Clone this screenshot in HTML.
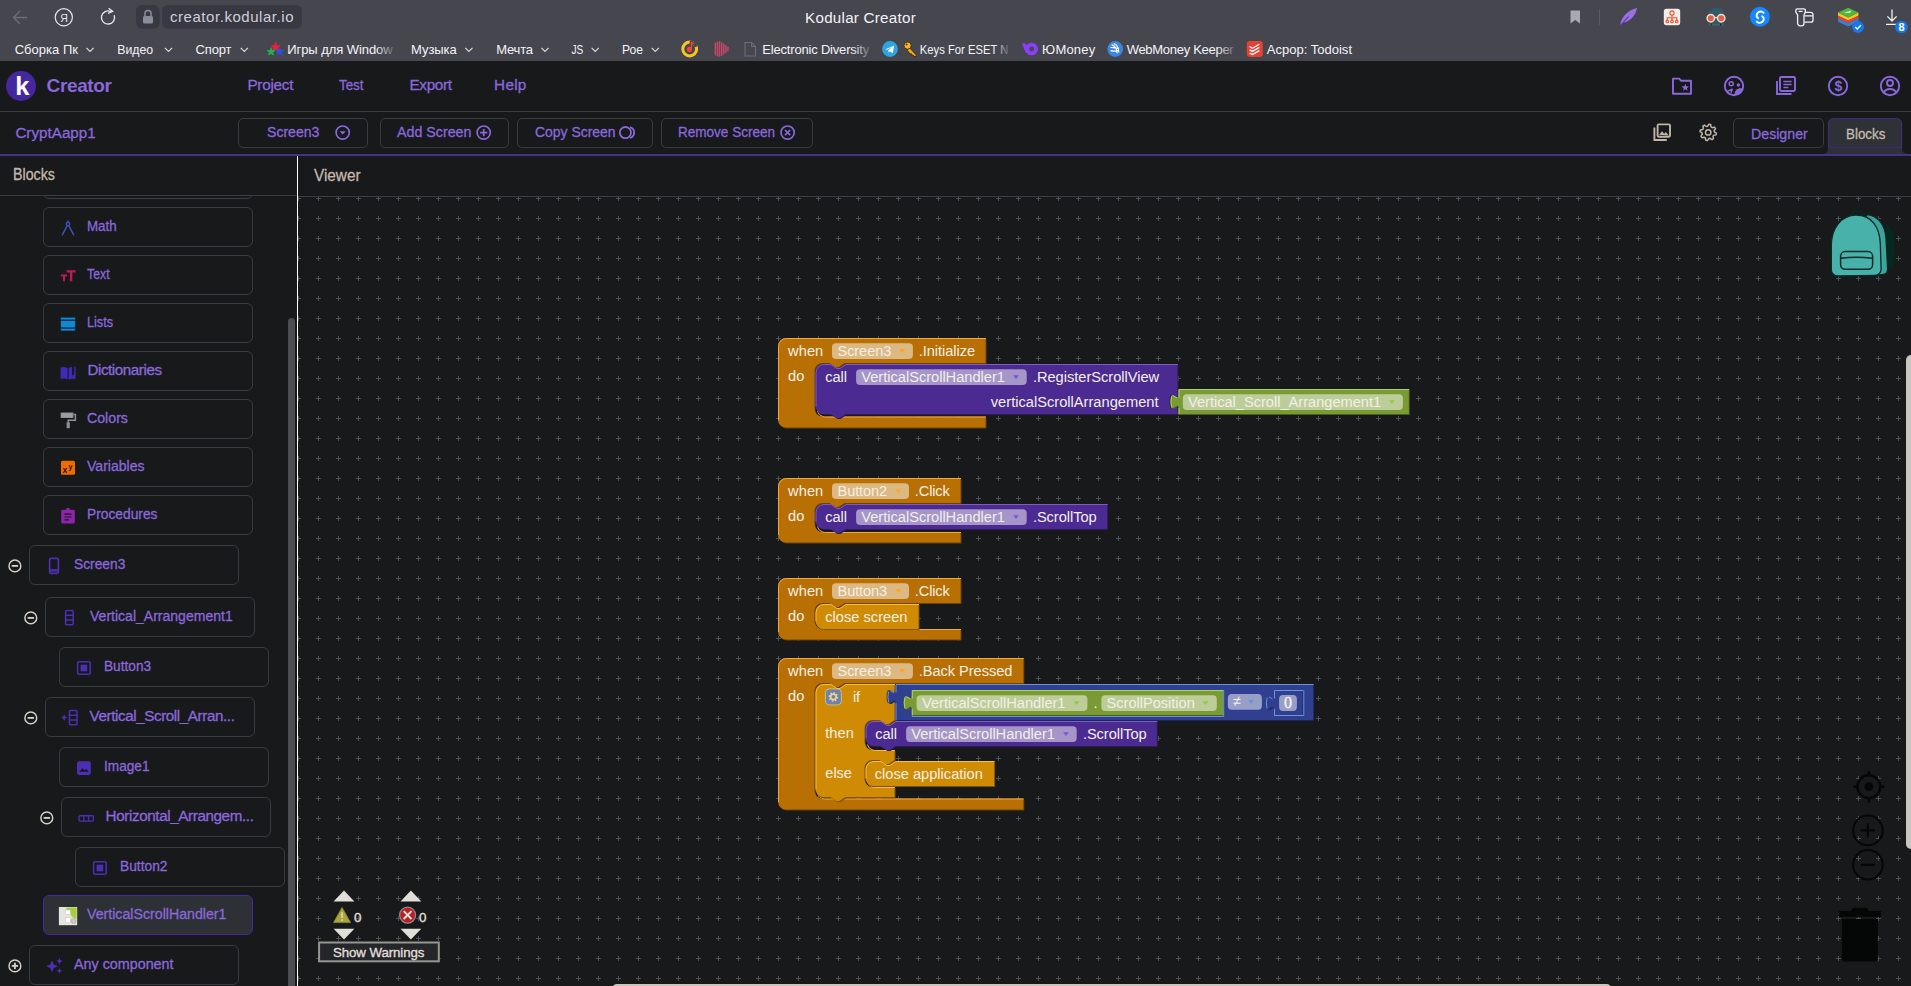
<!DOCTYPE html>
<html lang="en"><head><meta charset="utf-8"><title>Kodular Creator</title>
<style>
*{box-sizing:border-box;margin:0;padding:0}
html,body{width:1911px;height:986px;overflow:hidden;background:#18191b;}
body{position:relative;font-family:"Liberation Sans",sans-serif;}
.t{position:absolute;white-space:nowrap;line-height:1;transform-origin:0 50%;}
.j{-webkit-text-stroke:.3px currentColor;}
.a{position:absolute;}
svg{position:absolute;overflow:visible}
svg text{font-family:"Liberation Sans",sans-serif;}
</style></head>
<body>
<div class="a" id="browser" style="left:0;top:0;width:1911px;height:61px;background:#46464f"></div>
<svg class="a" style="left:0;top:0" width="1911" height="61" viewBox="0 0 1911 61">
<path d="M27 17.5H14M20 11l-6.5 6.5L20 24" fill="none" stroke="#6d6d78" stroke-width="1.4"/>
<circle cx="63.8" cy="17.3" r="8.6" fill="none" stroke="#e4e4ea" stroke-width="1.2"/>
<text x="60.30" y="21.60" font-size="10.50" fill="#e4e4ea" >Я</text>
<path d="M114.2 15.2a6.6 6.6 0 1 1 -3.2 -3.6" fill="none" stroke="#e4e4ea" stroke-width="1.4"/>
<path d="M108.6 8.2l4 3.2l-4.6 2" fill="none" stroke="#e4e4ea" stroke-width="1.4"/>
<rect x="136" y="5" width="23.6" height="23.8" rx="6" fill="#383842"/>
<rect x="162" y="5" width="140" height="23.8" rx="6" fill="#383842"/>
<rect x="143" y="16" width="10" height="7.6" rx="1.6" fill="#8a8e9a"/>
<path d="M145 16v-2.6a3 3 0 0 1 6 0V16" fill="none" stroke="#8a8e9a" stroke-width="1.5"/>
<text x="170.00" y="22.40" font-size="15.00" fill="#cfcfd8" letter-spacing="0.545" >creator.kodular.io</text>
<text x="805.10" y="22.60" font-size="15.20" fill="#f2f2f6" letter-spacing="0.243" >Kodular Creator</text>
<path d="M1570.5 10.5h9.5v13l-4.75 -3.6l-4.75 3.6z" fill="#a9a9b1"/>
<rect x="1599" y="9" width="1" height="16" fill="#5a5a64"/>
<path d="M1620 25c2-9 8-15 17-17c-1 7-6 13-13 14.5z" fill="#9a6fe0"/><path d="M1619.5 26.5l9 -10" stroke="#5a2fb0" stroke-width="1.1"/>
<rect x="1663.8" y="8.8" width="16.4" height="16.4" rx="2.6" fill="#f0eeeb"/>
<g fill="none" stroke="#f0522a" stroke-width="1.1"><circle cx="1672" cy="13" r="2.1"/><path d="M1672 15.100v2.700M1667.300 20.200v-2.400h9.400v2.400M1672 17.800v2.400"/><circle cx="1667.300" cy="21.400" r="1.300"/><circle cx="1672" cy="21.400" r="1.300"/><circle cx="1676.700" cy="21.400" r="1.300"/></g>
<path d="M1707.600 19.500c-.6-7 3.400-11.700 8.700-11.700s9.300 4.700 8.700 11.700l-1 6.700h-15.400z" fill="#2f5b6b"/>
<circle cx="1710.800" cy="18.200" r="3.700" fill="#e25f4a" stroke="#eadccd" stroke-width="1.500"/><circle cx="1721.200" cy="18.200" r="3.700" fill="#e25f4a" stroke="#eadccd" stroke-width="1.500"/><path d="M1714.500 17.600h3" stroke="#eadccd" stroke-width="1.400"/>
<rect x="1711.400" y="23.600" width="9.600" height="2.200" fill="#14262e"/><path d="M1713 23.600v2.200M1715 23.600v2.200M1717 23.600v2.200M1719 23.600v2.200" stroke="#9fb4bc" stroke-width=".8"/>
<circle cx="1759.9" cy="16.800" r="10" fill="#1688fb"/>
<path d="M1763.6 12.8c-1.8-1.8-4.4-1.6-6 .2c-1.6 1.8-1.2 3.8 .6 5.2M1756.8 21.6c1.8 1.8 4.4 1.6 6-.2c1.6-1.8 1.2-3.8-.6-5.2" fill="none" stroke="#fff" stroke-width="1.9" stroke-linecap="round"/>
<path d="M1797.400 8.800h6.400a1.600 1.600 0 0 1 1.600 1.600v1.800l-1.400 2.600v8.400a2.600 2.600 0 0 1-2.600 2.600h-1.200a2.600 2.600 0 0 1-2.600-2.600v-8.400l-1.800-2.600v-1.800a1.600 1.600 0 0 1 1.600-1.600z" fill="none" stroke="#f0f0f4" stroke-width="1.300" stroke-linejoin="round"/><path d="M1798.600 11.400h4" stroke="#f0f0f4" stroke-width="1.300"/>
<path d="M1804.400 12.400h6.400a2.200 2.200 0 0 1 2.200 2.200v5.400a2.200 2.200 0 0 1-2.200 2.200h-6.400M1804.400 15.800h8.600" fill="none" stroke="#f0f0f4" stroke-width="1.300"/>
<path d="M1838 12.6L1848.200 17.4L1858.400 12.6V15.8L1848.200 20.6L1838 15.8z" fill="#f7c720"/>
<path d="M1838 15.6L1848.200 20.4L1858.400 15.6V18.8L1848.200 23.6L1838 18.8z" fill="#e8402f"/>
<path d="M1838 18.6L1848.200 23.4L1858.400 18.6V21.8L1848.200 26.6L1838 21.8z" fill="#2a84e6"/>
<path d="M1838 12.600L1848.200 7.800L1858.400 12.600L1848.200 17.400z" fill="#4fb83c"/><path d="M1843.500 12.800l8-2.200l-1.500 2.400z" fill="#d8f0c8"/>
<circle cx="1858" cy="27" r="6" fill="#1677e8"/><path d="M1855.200 27l2 2l3.600 -3.800" fill="none" stroke="#fff" stroke-width="1.3"/>
<path d="M1892 9.5v11M1887.4 16.4l4.6 4.6l4.6 -4.6M1886 24.4h12" fill="none" stroke="#f0f0f4" stroke-width="1.3"/>
<circle cx="1901.400" cy="27" r="6.300" fill="#1677e8"/>
<text x="1898.50" y="31.00" font-size="11.00" fill="#fff" font-weight="bold" >8</text>
<text x="14.70" y="53.90" font-size="13.00" fill="#f4f4f8" letter-spacing="0.012" >Сборка Пк</text>
<path d="M86.4 47.8 l3.6 3.6 l3.6 -3.6" fill="none" stroke="#d8d8de" stroke-width="1.2"/>
<text x="117.20" y="53.90" font-size="13.00" fill="#f4f4f8" textLength="35.90" lengthAdjust="spacingAndGlyphs" >Видео</text>
<path d="M164.9 47.8 l3.6 3.6 l3.6 -3.6" fill="none" stroke="#d8d8de" stroke-width="1.2"/>
<text x="195.60" y="53.90" font-size="13.00" fill="#f4f4f8" letter-spacing="-0.164" >Спорт</text>
<path d="M240.7 47.8 l3.6 3.6 l3.6 -3.6" fill="none" stroke="#d8d8de" stroke-width="1.2"/>
<text x="411.00" y="53.90" font-size="13.00" fill="#f4f4f8" letter-spacing="-0.039" >Музыка</text>
<path d="M465.3 47.8 l3.6 3.6 l3.6 -3.6" fill="none" stroke="#d8d8de" stroke-width="1.2"/>
<text x="496.30" y="53.90" font-size="13.00" fill="#f4f4f8" letter-spacing="-0.224" >Мечта</text>
<path d="M541.4 47.8 l3.6 3.6 l3.6 -3.6" fill="none" stroke="#d8d8de" stroke-width="1.2"/>
<text x="571.40" y="53.90" font-size="13.00" fill="#f4f4f8" textLength="11.80" lengthAdjust="spacingAndGlyphs" >JS</text>
<path d="M591.6 47.8 l3.6 3.6 l3.6 -3.6" fill="none" stroke="#d8d8de" stroke-width="1.2"/>
<text x="622.00" y="53.90" font-size="13.00" fill="#f4f4f8" textLength="20.90" lengthAdjust="spacingAndGlyphs" >Рое</text>
<path d="M651.7 47.8 l3.6 3.6 l3.6 -3.6" fill="none" stroke="#d8d8de" stroke-width="1.2"/>
<defs><linearGradient id="fd1" x1="0" x2="1"><stop offset="0.840" stop-color="#f4f4f8"/><stop offset="1" stop-color="#f4f4f8" stop-opacity="0.200"/></linearGradient></defs>
<text x="287.20" y="53.90" font-size="13.00" fill="url(#fd1)" letter-spacing="-0.062" >Игры для Window</text>
<text x="762.30" y="53.90" font-size="13.00" fill="url(#fd1)" letter-spacing="-0.191" >Electronic Diversity</text>
<text x="919.80" y="53.90" font-size="13.00" fill="url(#fd1)" textLength="88.60" lengthAdjust="spacingAndGlyphs" >Keys For ESET N</text>
<text x="1042.10" y="53.90" font-size="13.00" fill="#f4f4f8" letter-spacing="0.189" >ЮMoney</text>
<text x="1126.70" y="53.90" font-size="13.00" fill="url(#fd1)" letter-spacing="-0.289" >WebMoney Keeper</text>
<text x="1266.70" y="53.90" font-size="13.00" fill="#f4f4f8" letter-spacing="0.020" >Аcpop: Todoist</text>
<path d="M275.6 41.5l1.6 3.6l3.8 .3l-2.9 2.5l.9 3.8l-3.4-2l-3.4 2l.9-3.8l-2.9-2.5l3.8-.3z" fill="#e0243c"/>
<path d="M271 47l1.4 3l3.2 .3l-2.4 2.1l.8 3.2l-3-1.7l-2.9 1.7l.8-3.2l-2.4-2.1l3.2-.3z" fill="#22b44c"/>
<path d="M279.6 47l1.4 3l3.2 .3l-2.4 2.1l.8 3.2l-3-1.7l-2.9 1.7l.8-3.2l-2.4-2.1l3.2-.3z" fill="#2a50e0"/>
<circle cx="689.7" cy="49" r="6.9" fill="none" stroke="#f6c81e" stroke-width="3"/><path d="M689.7 42.1a6.9 6.9 0 0 1 6.5 4.6" fill="none" stroke="#46464f" stroke-width="3.4"/>
<circle cx="689.4" cy="49.4" r="2.6" fill="#f0433a"/><path d="M691.4 49.4v-7l3 1.2" stroke="#f0433a" stroke-width="1.3" fill="none"/>
<rect x="714.6" y="42.5" width="1.5" height="13" rx=".7" fill="#c2486a"/>
<rect x="716.7" y="41.5" width="1.5" height="15" rx=".7" fill="#c2486a"/>
<rect x="718.8" y="41.0" width="1.5" height="16" rx=".7" fill="#c2486a"/>
<rect x="720.9" y="42.0" width="1.5" height="14" rx=".7" fill="#c2486a"/>
<rect x="723.0" y="43.5" width="1.5" height="11" rx=".7" fill="#c2486a"/>
<rect x="725.1" y="45.0" width="1.5" height="8" rx=".7" fill="#c2486a"/>
<rect x="727.2" y="46.5" width="1.5" height="5" rx=".7" fill="#c2486a"/>
<path d="M745 42.5h6.5l4 4V56H745z M751.5 42.5v4h4" fill="none" stroke="#6c6c78" stroke-width="1.1"/>
<circle cx="890" cy="49" r="7.9" fill="#2ea5e0"/><path d="M885.6 49.2l8.6-3.6l-1.5 7.6l-2.8-2l-1.4 1.4l-.2-2.2l4-3.6l-5 3z" fill="#fff"/>
<g stroke="#3a2a08" stroke-width=".9" stroke-linejoin="round"><path d="M909.400 47.600l6.800 7.400v1.600h-2.200l-.6-1.400l-1.400 .2l-.4-1.600l-1.600 .2l-2.800-3.800z" fill="#f2a91c"/><circle cx="907.600" cy="45.600" r="3.600" fill="#f6b526"/></g><circle cx="906.600" cy="44.600" r="1" fill="#46464f"/>
<circle cx="1031.600" cy="49" r="4.400" fill="none" stroke="#8b3ffd" stroke-width="3.900"/><path d="M1021.800 43.400h3.800l2.200 5.600a6.400 6.400 0 0 0 .4 3.600l-2.200 .6z" fill="#8b3ffd"/>
<circle cx="1115.2" cy="49" r="7.9" fill="#3a86e0"/><path d="M1111.6 44.6c3 .8 5 3 5.6 8.6M1114 43.4c3 1.2 4.6 4 4.8 9M1110.4 47.2c2 .2 5.4 1.2 8.6 1.2M1110.6 50.6c2.4 .6 5.6 .6 8 0" fill="none" stroke="#fff" stroke-width="1.1"/>
<rect x="1246.8" y="41" width="16" height="16" rx="3" fill="#e44232"/><path d="M1249.6 46.6l2.8 1.6l7-4M1249.6 49.8l2.8 1.6l7-4M1249.6 53l2.8 1.6l7-4" fill="none" stroke="#fff" stroke-width="1.3"/>
</svg>
<div class="a" id="appbar" style="left:0;top:61px;width:1911px;height:51px;background:#18191b;border-bottom:1px solid #3a3b3e"></div>
<div class="a" style="left:5.8px;top:70.9px;width:30.2px;height:30.2px;border-radius:50%;background:#4527a0"></div>
<span class="t " style="left:15.30px;top:73.61px;font-size:25.50px;color:#fff;font-weight:bold;">k</span>
<span class="t " style="left:46.60px;top:75.82px;font-size:19.00px;color:#8a68dc;letter-spacing:-0.380px;font-weight:bold;">Creator</span>
<span class="t j" style="left:247.40px;top:77.15px;font-size:15.30px;color:#8a68dc;letter-spacing:-0.269px;">Project</span>
<span class="t j" style="left:339.20px;top:77.15px;font-size:15.30px;color:#8a68dc;transform:scaleX(0.8731);">Test</span>
<span class="t j" style="left:409.50px;top:77.15px;font-size:15.30px;color:#8a68dc;letter-spacing:-0.343px;">Export</span>
<span class="t j" style="left:494.10px;top:77.15px;font-size:15.30px;color:#8a68dc;letter-spacing:0.276px;">Help</span>
<svg class="a" style="left:0;top:61px" width="1911" height="95" viewBox="0 61 1911 95" fill="none" stroke="#8a68dc" stroke-width="1.9">
<path d="M1673 78.6h6.2l2 2.2h9.8v13h-18z" stroke-linejoin="round"/><path d="M1685.30 83.70L1686.30 86.22L1689.01 86.39L1686.92 88.13L1687.59 90.76L1685.30 89.30L1683.01 90.76L1683.68 88.13L1681.59 86.39L1684.30 86.22z" fill="#8a68dc" stroke="none"/>
<circle cx="1734" cy="86" r="9.200"/><circle cx="1731.200" cy="83.700" r="2" stroke-width="1.500"/><circle cx="1738.400" cy="85" r="1.700" fill="#8a68dc" stroke="none"/><path d="M1734.600 95c-.4-4.200 2.400-6.800 5.800-6.800c1.400 0 2.400 .4 3 1a9.200 9.200 0 0 1-8.800 5.800z" fill="#8a68dc" stroke="none"/><path d="M1726.600 91.600l5.600-2.400l-1.200 3.600" stroke-width="1.500" stroke-linejoin="round"/>
<rect x="1780" y="77" width="15" height="14" rx="1.2"/><path d="M1777 81v13h14.5"/><path d="M1783.4 81.4h8.2M1783.4 84.6h8.2M1783.4 87.6h5" stroke-width="1.5"/>
<circle cx="1838" cy="86" r="9.2"/>
<text x="1834.40" y="91.00" font-size="14.00" fill="#8a68dc" font-weight="bold" stroke="none">$</text>
<circle cx="1890" cy="86" r="9.2"/><circle cx="1890" cy="83" r="3" /><path d="M1883.6 92.4c1.6-2.6 4-3.4 6.4-3.4s4.8 .8 6.4 3.4"/>
<g stroke-width="1.700">
<circle cx="342.7" cy="132.6" r="6.6"/><path d="M339.6 131.2h6.2l-3.1 3.4z" fill="#8a68dc" stroke="none"/>
<circle cx="483.7" cy="132.6" r="6.6"/><path d="M483.7 129v7.2M480.1 132.6h7.2"/>
<circle cx="625.4" cy="132.6" r="5.6" stroke-width="1.8"/><path d="M630 127.2a5.6 5.6 0 0 1 0 10.8" stroke-width="1.8"/>
<circle cx="787.6" cy="132.6" r="6.6"/><path d="M785 130l5.2 5.2M790.2 130l-5.2 5.2"/>
</g>
<g stroke="#beb4a8" stroke-width="1.900">
<rect x="1657.6" y="124.4" width="12.4" height="12.4" rx="1.2"/><path d="M1654.4 127.6v12.4h12.4"/><path d="M1659 134.8l3-3.6l2.2 2.6l1.6-1.8l3 3.6z" fill="#beb4a8" stroke="none"/>
<path d="M1716.37 133.11 L1716.02 134.87 L1713.70 135.26 L1712.95 136.39 L1713.48 138.68 L1711.98 139.68 L1710.07 138.31 L1708.73 138.58 L1707.49 140.57 L1705.73 140.22 L1705.34 137.90 L1704.21 137.15 L1701.92 137.68 L1700.92 136.18 L1702.29 134.27 L1702.02 132.93 L1700.03 131.69 L1700.38 129.93 L1702.70 129.54 L1703.45 128.41 L1702.92 126.12 L1704.42 125.12 L1706.33 126.49 L1707.67 126.22 L1708.91 124.23 L1710.67 124.58 L1711.06 126.90 L1712.19 127.65 L1714.48 127.12 L1715.48 128.62 L1714.11 130.53 L1714.38 131.87z" stroke-width="1.5" stroke-linejoin="round"/>
<circle cx="1708.2" cy="132.4" r="2.7" stroke-width="1.5"/>
</g>
</svg>
<span class="t j" style="left:15.40px;top:124.53px;font-size:15.20px;color:#8a68dc;letter-spacing:0.014px;">CryptAapp1</span>
<div class="a btn" style="left:238.0px;top:118.300px;width:129.5px;height:29.600px;border:1px solid #3a3b3f;border-radius:5px"></div>
<span class="t j" style="left:267.00px;top:124.23px;font-size:15.20px;color:#8a68dc;transform:scaleX(0.9272);">Screen3</span>
<div class="a btn" style="left:380.0px;top:118.300px;width:128.8px;height:29.600px;border:1px solid #3a3b3f;border-radius:5px"></div>
<span class="t j" style="left:397.30px;top:124.23px;font-size:15.20px;color:#8a68dc;transform:scaleX(0.9379);">Add Screen</span>
<div class="a btn" style="left:517.0px;top:118.300px;width:135.6px;height:29.600px;border:1px solid #3a3b3f;border-radius:5px"></div>
<span class="t j" style="left:534.50px;top:124.23px;font-size:15.20px;color:#8a68dc;transform:scaleX(0.9184);">Copy Screen</span>
<div class="a btn" style="left:661.0px;top:118.300px;width:152.0px;height:29.600px;border:1px solid #3a3b3f;border-radius:5px"></div>
<span class="t j" style="left:678.30px;top:124.23px;font-size:15.20px;color:#8a68dc;transform:scaleX(0.8910);">Remove Screen</span>
<div class="a btn" style="left:1733.3px;top:118.3px;width:90.6px;height:29.6px;border:1px solid #3a3b3f;border-radius:5px"></div>
<span class="t j" style="left:1750.60px;top:126.43px;font-size:15.20px;color:#8a68dc;transform:scaleX(0.9337);">Designer</span>
<svg class="a" style="left:1818px;top:114px" width="93" height="42" viewBox="1818 114 93 42"><path d="M1823 154a5 5 0 0 0 5-5V123.200a5 5 0 0 1 5-5h64a5 5 0 0 1 5 5V149a5 5 0 0 0 5 5z" fill="#2e3135"/><path d="M1828.500 147.600V123.700a5 5 0 0 1 5-5h63.200a5 5 0 0 1 5 5v23.900z" fill="none" stroke="#3f2c86" stroke-width="1"/></svg>
<span class="t j" style="left:1846.00px;top:126.43px;font-size:15.20px;color:#c4bbb0;transform:scaleX(0.8802);">Blocks</span>
<div class="a" style="left:0;top:154px;width:1911px;height:2px;background:#47308c"></div>
<span class="t j" style="left:12.60px;top:165.59px;font-size:16.20px;color:#c2b8ab;transform:scaleX(0.8803);">Blocks</span>
<span class="t j" style="left:314.40px;top:167.09px;font-size:16.20px;color:#c2b8ab;transform:scaleX(0.9465);">Viewer</span>
<div class="a" style="left:0;top:195px;width:296px;height:1px;background:#3b3c3f"></div>
<div class="a" style="left:298px;top:196px;width:1613px;height:1px;background:#3b3c3f"></div>
<div class="a" style="left:297px;top:156px;width:1.400px;height:830px;background:#fff;z-index:5"></div>
<div class="a" id="tree" style="left:0;top:196px;width:296px;height:790px;overflow:hidden">
<div class="a item" style="left:43.0px;top:-37.0px;width:210.0px;height:40px;border:1px solid #3a3b3f;border-radius:6px;"></div>
<div class="a item" style="left:43.0px;top:11.0px;width:210.0px;height:40px;border:1px solid #3a3b3f;border-radius:6px;"></div>
<span class="t j" style="left:87.40px;top:22.23px;font-size:15.20px;color:#8a68dc;transform:scaleX(0.8790);">Math</span>
<div class="a item" style="left:43.0px;top:59.0px;width:210.0px;height:40px;border:1px solid #3a3b3f;border-radius:6px;"></div>
<span class="t j" style="left:87.40px;top:70.23px;font-size:15.20px;color:#8a68dc;transform:scaleX(0.8107);">Text</span>
<div class="a item" style="left:43.0px;top:107.0px;width:210.0px;height:40px;border:1px solid #3a3b3f;border-radius:6px;"></div>
<span class="t j" style="left:87.40px;top:118.23px;font-size:15.20px;color:#8a68dc;transform:scaleX(0.8352);">Lists</span>
<div class="a item" style="left:43.0px;top:155.0px;width:210.0px;height:40px;border:1px solid #3a3b3f;border-radius:6px;"></div>
<span class="t j" style="left:87.40px;top:166.23px;font-size:15.20px;color:#8a68dc;letter-spacing:-0.428px;">Dictionaries</span>
<div class="a item" style="left:43.0px;top:203.0px;width:210.0px;height:40px;border:1px solid #3a3b3f;border-radius:6px;"></div>
<span class="t j" style="left:87.40px;top:214.23px;font-size:15.20px;color:#8a68dc;transform:scaleX(0.9333);">Colors</span>
<div class="a item" style="left:43.0px;top:251.0px;width:210.0px;height:40px;border:1px solid #3a3b3f;border-radius:6px;"></div>
<span class="t j" style="left:87.40px;top:262.23px;font-size:15.20px;color:#8a68dc;transform:scaleX(0.9254);">Variables</span>
<div class="a item" style="left:43.0px;top:299.0px;width:210.0px;height:40px;border:1px solid #3a3b3f;border-radius:6px;"></div>
<span class="t j" style="left:87.40px;top:310.23px;font-size:15.20px;color:#8a68dc;transform:scaleX(0.9070);">Procedures</span>
<div class="a item" style="left:29.0px;top:349.0px;width:210.0px;height:40px;border:1px solid #3a3b3f;border-radius:6px;"></div>
<span class="t j" style="left:73.60px;top:360.23px;font-size:15.20px;color:#8a68dc;transform:scaleX(0.9078);">Screen3</span>
<div class="a item" style="left:45.0px;top:401.0px;width:210.0px;height:40px;border:1px solid #3a3b3f;border-radius:6px;"></div>
<span class="t j" style="left:89.60px;top:412.23px;font-size:15.20px;color:#8a68dc;transform:scaleX(0.9236);">Vertical_Arrangement1</span>
<div class="a item" style="left:59.0px;top:451.0px;width:210.0px;height:40px;border:1px solid #3a3b3f;border-radius:6px;"></div>
<span class="t j" style="left:103.50px;top:462.23px;font-size:15.20px;color:#8a68dc;transform:scaleX(0.8990);">Button3</span>
<div class="a item" style="left:45.0px;top:501.0px;width:210.0px;height:40px;border:1px solid #3a3b3f;border-radius:6px;"></div>
<span class="t j" style="left:89.60px;top:512.23px;font-size:15.20px;color:#8a68dc;letter-spacing:-0.400px;">Vertical_Scroll_Arran...</span>
<div class="a item" style="left:59.0px;top:551.0px;width:210.0px;height:40px;border:1px solid #3a3b3f;border-radius:6px;"></div>
<span class="t j" style="left:103.50px;top:562.23px;font-size:15.20px;color:#8a68dc;transform:scaleX(0.8976);">Image1</span>
<div class="a item" style="left:61.0px;top:601.0px;width:210.0px;height:40px;border:1px solid #3a3b3f;border-radius:6px;"></div>
<span class="t j" style="left:105.60px;top:612.23px;font-size:15.20px;color:#8a68dc;letter-spacing:-0.376px;">Horizontal_Arrangem...</span>
<div class="a item" style="left:75.0px;top:651.0px;width:210.0px;height:40px;border:1px solid #3a3b3f;border-radius:6px;"></div>
<span class="t j" style="left:119.50px;top:662.23px;font-size:15.20px;color:#8a68dc;transform:scaleX(0.9066);">Button2</span>
<div class="a item" style="left:43.0px;top:699.0px;width:210.0px;height:40px;border:1px solid #4527a0;border-radius:6px;background:#2d3034;"></div>
<span class="t j" style="left:87.20px;top:710.23px;font-size:15.20px;color:#8a68dc;transform:scaleX(0.9335);">VerticalScrollHandler1</span>
<div class="a item" style="left:29.0px;top:749.0px;width:210.0px;height:40px;border:1px solid #3a3b3f;border-radius:6px;"></div>
<span class="t j" style="left:73.60px;top:760.23px;font-size:15.20px;color:#8a68dc;transform:scaleX(0.9430);">Any component</span>
</div>
<div class="a" style="left:287.500px;top:318px;width:7px;height:668px;background:#4a4f54;border-radius:3.500px 3.500px 0 0"></div>
<svg class="a" style="left:0;top:196px" width="296" height="790" viewBox="0 196 296 790">
<g stroke="#3f51b5" stroke-width="1.5" fill="none"><circle cx="68" cy="224" r="1.7"/><path d="M67.2 225.6l-5 9.6M68.8 225.6l5 9.6M68 220.4v2"/></g>
<path d="M66.6 270.2h9v2.3h-3.3v8.8h-2.4v-8.8h-3.3zM61 274.6h6v2h-2v4.7h-2v-4.7h-2z" fill="#c2185b"/>
<g transform="translate(0,1.200)">
<rect x="60.8" y="316.4" width="14.4" height="2" fill="#0d8ad6"/><rect x="60.8" y="319.6" width="14.4" height="6.6" fill="#0d8ad6"/><rect x="60.8" y="327.4" width="14.4" height="2" fill="#0d8ad6"/>
<path d="M60.6 366.4c2.4-.8 4.8-.6 7 .6v11.4c-2.2-1.2-4.6-1.4-7-.6zM68.6 367c1-.8 2.2-1.2 3.4-1.4v8.6l2.2-1.2v-7.6l1.4-.2v12.6c-2.4-.6-4.8-.4-7 .6z" fill="#3d2bb8"/>
<path d="M61.4 412h11.2v4H61.4zM73.6 413.4h1.8v5.6h-7.2v2.4" fill="none" stroke="#8c8f93" stroke-width="1.5"/><rect x="61.4" y="412" width="11.2" height="4" fill="#9b9ea2"/><rect x="66.6" y="421" width="3.2" height="6" fill="#8c8f93"/>
<rect x="61" y="459.6" width="14" height="14" rx="1.6" fill="#ef6c00"/>
<text x="62.40" y="471.60" font-size="8.50" fill="#25130a" font-weight="bold" >x</text>
<text x="68.60" y="467.40" font-size="7.00" fill="#25130a" font-weight="bold" >y</text>
<path d="M62.6 508.6h3.4a2 2 0 0 1 4 0h3.4a1.4 1.4 0 0 1 1.4 1.4v11a1.4 1.4 0 0 1 -1.4 1.4H62.6a1.4 1.4 0 0 1 -1.4 -1.4v-11a1.4 1.4 0 0 1 1.4 -1.4z" fill="#8e24aa"/><path d="M64.4 513h7.2M64.4 515.8h7.2M64.4 518.6h4.6" stroke="#18191b" stroke-width="1.2"/>
</g>
<circle cx="14.9" cy="565.9" r="5.900" fill="none" stroke="#d2cec8" stroke-width="1.500"/><path d="M11.7 565.9h6.400" stroke="#d2cec8" stroke-width="1.900"/>
<circle cx="30.8" cy="617.9" r="5.900" fill="none" stroke="#d2cec8" stroke-width="1.500"/><path d="M27.6 617.9h6.400" stroke="#d2cec8" stroke-width="1.900"/>
<circle cx="30.8" cy="717.9" r="5.900" fill="none" stroke="#d2cec8" stroke-width="1.500"/><path d="M27.6 717.9h6.400" stroke="#d2cec8" stroke-width="1.900"/>
<circle cx="46.8" cy="817.9" r="5.900" fill="none" stroke="#d2cec8" stroke-width="1.500"/><path d="M43.6 817.9h6.400" stroke="#d2cec8" stroke-width="1.900"/>
<circle cx="14.9" cy="965.9" r="5.900" fill="none" stroke="#d2cec8" stroke-width="1.500"/><path d="M11.7 965.9h6.400" stroke="#d2cec8" stroke-width="1.900"/><path d="M14.9 962.7v6.400" stroke="#d2cec8" stroke-width="1.900"/>
<rect x="49.6" y="558.4" width="8.8" height="15" rx="1.6" fill="none" stroke="#4d2eb4" stroke-width="1.7"/><path d="M49.6 570.4h8.8" stroke="#4d2eb4" stroke-width="2.4"/>
<g fill="none" stroke="#4d2eb4" stroke-width="1.5"><rect x="65.6" y="610.4" width="7.6" height="14.4" rx="1"/><path d="M65.6 615.2h7.6M65.6 620h7.6"/></g>
<rect x="77.6" y="661.7" width="12.6" height="12.6" rx="1.4" fill="none" stroke="#4d2eb4" stroke-width="1.5"/><rect x="80.6" y="664.7" width="6.6" height="6.6" fill="#4d2eb4"/>
<g fill="none" stroke="#4d2eb4" stroke-width="1.5"><rect x="69.4" y="710.4" width="7.6" height="14.4" rx="1"/><path d="M69.4 715.2h7.6M69.4 720h7.6M61.6 717.6h5.2M64.2 715v5.2"/></g>
<rect x="77" y="761.200" width="13.800" height="13.700" rx="1.800" fill="#4d2eb4"/><path d="M79.400 771.800l3-3.800l2.200 2.600l1.600-1.800l2.400 3z" fill="#18191b"/>
<g fill="none" stroke="#4d2eb4" stroke-width="1.4"><rect x="79" y="815.800" width="14.400" height="5.300" rx="1"/><path d="M83.800 815.800v5.300M88.600 815.800v5.300"/></g>
<rect x="93.6" y="861.7" width="12.6" height="12.6" rx="1.4" fill="none" stroke="#4d2eb4" stroke-width="1.5"/><rect x="96.6" y="864.7" width="6.6" height="6.6" fill="#4d2eb4"/>
<rect x="58.900" y="907" width="18.300" height="18.200" fill="#e4e4e0"/><path d="M66.500 907.500h10.200v11.500l-4 -1.500l-3 -4l-3.200 -1.500z" fill="#a5cf3a"/><rect x="65.300" y="910" width="5" height="4.600" fill="#fff" stroke="#c8c8c4" stroke-width=".6"/><rect x="65.300" y="917.800" width="5" height="4.600" fill="#fff" stroke="#c8c8c4" stroke-width=".6"/><circle cx="73.600" cy="921" r="2.600" fill="#c9c9c3" stroke="#b4b4ae" stroke-width=".8"/>
<g transform="translate(0,1.600)"><path d="M52 958.600l1.800 4.200l4.200 1.800l-4.200 1.800l-1.800 4.200l-1.800-4.200l-4.200-1.800l4.200-1.800z" fill="#4d2eb4"/><path d="M59.500 956.400l1 2.100l2.100 1l-2.100 1l-1 2.100l-1-2.100l-2.100-1l2.100-1zM59.500 966.400l.9 1.900l1.900 .9l-1.900 .9l-.9 1.900l-.9-1.900l-1.900-.9l1.900-.9z" fill="#4d2eb4"/></g>
</svg>
<svg class="a" id="ws" style="left:298px;top:197px;overflow:hidden" width="1613" height="789" viewBox="298 197 1613 789">
<defs><pattern id="grid" x="308" y="208" width="20" height="20" patternUnits="userSpaceOnUse"><path d="M8 10.5h5M10.5 8v5" stroke="#4b5258" stroke-width="1" shape-rendering="crispEdges"/></pattern></defs>
<rect x="298" y="196" width="1613" height="790" fill="url(#grid)"/>
<g id="blocks">
<path d="M778,346 A8,8 0 0,1 786,338 H985.5 v25 H844.5 l-6,4 -3,0 -6,-4 h-7 a8,8 0 0,0 -8,8 v37.5 a8,8 0 0,0 8,8 H985.5 v11 H786 a8,8 0 0,1 -8,-8 z" fill="#6e4302" transform="translate(1,1)"/><path d="M778,346 A8,8 0 0,1 786,338 H985.5 v25 H844.5 l-6,4 -3,0 -6,-4 h-7 a8,8 0 0,0 -8,8 v37.5 a8,8 0 0,0 8,8 H985.5 v11 H786 a8,8 0 0,1 -8,-8 z" fill="#b87004"/><path d="M778,346 A8,8 0 0,1 786,338 H985.5 M778,419.5 V346 M816.84,410.5 a8,8 0 0,0 5.66,5.66 a8,8 0 0,0 2.34,.34 H985.5" fill="none" stroke="#f0a840" stroke-width="1" transform="translate(.5,.5)"/>
<text x="788.03" y="355.50" font-size="14.67" fill="#f3efe8" letter-spacing="0.067" >when</text>
<rect x="832" y="343.3" width="80.9" height="15.6" rx="4" fill="#fff" fill-opacity="0.5"/><text x="837.50" y="355.60" font-size="14.67" fill="#f3efe8" letter-spacing="-0.122" >Screen3</text><path d="M899.4,349.3 h5.8 l-2.9,3.8z" fill="#ffa51e"/>
<text x="918.70" y="355.50" font-size="14.67" fill="#f3efe8" letter-spacing="-0.057" >.Initialize</text>
<text x="788.00" y="380.90" font-size="14.67" fill="#f3efe8" letter-spacing="-0.010" >do</text>
<path d="M815.5,372 A8,8 0 0,1 823.5,364 H830.5 l6,4 3,0 6,-4 H1177.5 v25 v5 c0,10 -8,-8 -8,7.5 s8,-2.5 8,7.5 v5 H845.5 l-6,4 -3,0 -6,-4 H823.5 a8,8 0 0,1 -8,-8 z" fill="#2d1a57" transform="translate(1,1)"/><path d="M815.5,372 A8,8 0 0,1 823.5,364 H830.5 l6,4 3,0 6,-4 H1177.5 v25 v5 c0,10 -8,-8 -8,7.5 s8,-2.5 8,7.5 v5 H845.5 l-6,4 -3,0 -6,-4 H823.5 a8,8 0 0,1 -8,-8 z" fill="#4b2b91"/><path d="M815.5,372 A8,8 0 0,1 823.5,364 H830.5 l6,4 3,0 6,-4 H1177.5 M815.5,406 V372" fill="none" stroke="#7e5cc4" stroke-width="1" transform="translate(.5,.5)"/>
<text x="825.30" y="381.70" font-size="14.67" fill="#f3efe8" letter-spacing="-0.105" >call</text>
<rect x="856.1" y="369.3" width="170.6" height="15.6" rx="4" fill="#fff" fill-opacity="0.5"/><text x="861.30" y="381.60" font-size="14.67" fill="#f3efe8" letter-spacing="-0.028" >VerticalScrollHandler1</text><path d="M1013.1,375.3 h5.8 l-2.9,3.8z" fill="#7a52e0"/>
<text x="1032.90" y="381.70" font-size="14.67" fill="#f3efe8" letter-spacing="-0.033" >.RegisterScrollView</text>
<text x="990.78" y="407.20" font-size="14.67" fill="#f3efe8" >verticalScrollArrangement</text>
<path d="M1178.5,389 H1408.8 v25 H1178.5 V409 c0,-10 -8,8 -8,-7.5 s8,2.5 8,-7.5 z" fill="#495d1f" transform="translate(1,1)"/><path d="M1178.5,389 H1408.8 v25 H1178.5 V409 c0,-10 -8,8 -8,-7.5 s8,2.5 8,-7.5 z" fill="#7a9b34"/><path d="M1178.5,389 H1408.8 M1178.5,389 V397 M1178.5,407.5 V414 M1171.14,407 q-1.52,-5.5 0,-11 M1176.5,397.4 l-3.6,-2.1" fill="none" stroke="#a9d264" stroke-width="1" transform="translate(.5,.5)"/>
<rect x="1182.9" y="394.3" width="220" height="15.6" rx="4" fill="#fff" fill-opacity="0.5"/><text x="1188.00" y="406.60" font-size="14.67" fill="#f3efe8" letter-spacing="-0.027" >Vertical_Scroll_Arrangement1</text><path d="M1389,400.3 h5.8 l-2.9,3.8z" fill="#8ccc3c"/>
<path d="M778,486 A8,8 0 0,1 786,478 H960.5 v25 H844.5 l-6,4 -3,0 -6,-4 h-7 a8,8 0 0,0 -8,8 v13 a8,8 0 0,0 8,8 H960.5 v10.5 H786 a8,8 0 0,1 -8,-8 z" fill="#6e4302" transform="translate(1,1)"/><path d="M778,486 A8,8 0 0,1 786,478 H960.5 v25 H844.5 l-6,4 -3,0 -6,-4 h-7 a8,8 0 0,0 -8,8 v13 a8,8 0 0,0 8,8 H960.5 v10.5 H786 a8,8 0 0,1 -8,-8 z" fill="#b87004"/><path d="M778,486 A8,8 0 0,1 786,478 H960.5 M778,534.5 V486 M816.84,526 a8,8 0 0,0 5.66,5.66 a8,8 0 0,0 2.34,.34 H960.5" fill="none" stroke="#f0a840" stroke-width="1" transform="translate(.5,.5)"/>
<text x="788.03" y="495.50" font-size="14.67" fill="#f3efe8" letter-spacing="0.067" >when</text>
<rect x="832" y="483.3" width="77" height="15.6" rx="4" fill="#fff" fill-opacity="0.5"/><text x="837.50" y="495.60" font-size="14.67" fill="#f3efe8" letter-spacing="-0.143" >Button2</text><path d="M895.3,489.3 h5.8 l-2.9,3.8z" fill="#ffa51e"/>
<text x="914.80" y="495.50" font-size="14.67" fill="#f3efe8" letter-spacing="-0.155" >.Click</text>
<text x="788.00" y="520.90" font-size="14.67" fill="#f3efe8" letter-spacing="-0.010" >do</text>
<path d="M815.5,512 A8,8 0 0,1 823.5,504 H830.5 l6,4 3,0 6,-4 H1107.2 v25 H845.5 l-6,4 -3,0 -6,-4 H823.5 a8,8 0 0,1 -8,-8 z" fill="#2d1a57" transform="translate(1,1)"/><path d="M815.5,512 A8,8 0 0,1 823.5,504 H830.5 l6,4 3,0 6,-4 H1107.2 v25 H845.5 l-6,4 -3,0 -6,-4 H823.5 a8,8 0 0,1 -8,-8 z" fill="#4b2b91"/><path d="M815.5,512 A8,8 0 0,1 823.5,504 H830.5 l6,4 3,0 6,-4 H1107.2 M815.5,521 V512" fill="none" stroke="#7e5cc4" stroke-width="1" transform="translate(.5,.5)"/>
<text x="825.30" y="521.70" font-size="14.67" fill="#f3efe8" letter-spacing="-0.105" >call</text>
<rect x="856.1" y="509.3" width="170.6" height="15.6" rx="4" fill="#fff" fill-opacity="0.5"/><text x="861.30" y="521.60" font-size="14.67" fill="#f3efe8" letter-spacing="-0.028" >VerticalScrollHandler1</text><path d="M1013.1,515.3 h5.8 l-2.9,3.8z" fill="#7a52e0"/>
<text x="1032.90" y="521.70" font-size="14.67" fill="#f3efe8" letter-spacing="-0.067" >.ScrollTop</text>
<path d="M778,586 A8,8 0 0,1 786,578 H960.5 v25 H844.5 l-6,4 -3,0 -6,-4 h-7 a8,8 0 0,0 -8,8 v10 a8,8 0 0,0 8,8 H960.5 v10.5 H786 a8,8 0 0,1 -8,-8 z" fill="#6e4302" transform="translate(1,1)"/><path d="M778,586 A8,8 0 0,1 786,578 H960.5 v25 H844.5 l-6,4 -3,0 -6,-4 h-7 a8,8 0 0,0 -8,8 v10 a8,8 0 0,0 8,8 H960.5 v10.5 H786 a8,8 0 0,1 -8,-8 z" fill="#b87004"/><path d="M778,586 A8,8 0 0,1 786,578 H960.5 M778,631.5 V586 M816.84,623 a8,8 0 0,0 5.66,5.66 a8,8 0 0,0 2.34,.34 H960.5" fill="none" stroke="#f0a840" stroke-width="1" transform="translate(.5,.5)"/>
<text x="788.03" y="595.50" font-size="14.67" fill="#f3efe8" letter-spacing="0.067" >when</text>
<rect x="832" y="583.3" width="77" height="15.6" rx="4" fill="#fff" fill-opacity="0.5"/><text x="837.50" y="595.60" font-size="14.67" fill="#f3efe8" letter-spacing="-0.143" >Button3</text><path d="M895.3,589.3 h5.8 l-2.9,3.8z" fill="#ffa51e"/>
<text x="914.80" y="595.50" font-size="14.67" fill="#f3efe8" letter-spacing="-0.155" >.Click</text>
<text x="788.00" y="620.90" font-size="14.67" fill="#f3efe8" letter-spacing="-0.010" >do</text>
<path d="M815.5,612 A8,8 0 0,1 823.5,604 H830.5 l6,4 3,0 6,-4 H918.5 v25 H823.5 a8,8 0 0,1 -8,-8 z" fill="#7d5302" transform="translate(1,1)"/><path d="M815.5,612 A8,8 0 0,1 823.5,604 H830.5 l6,4 3,0 6,-4 H918.5 v25 H823.5 a8,8 0 0,1 -8,-8 z" fill="#d08b04"/><path d="M815.5,612 A8,8 0 0,1 823.5,604 H830.5 l6,4 3,0 6,-4 H918.5 M815.5,621 V612" fill="none" stroke="#f7bc4c" stroke-width="1" transform="translate(.5,.5)"/>
<text x="825.20" y="621.70" font-size="14.67" fill="#f3efe8" >close screen</text>
<path d="M778,666 A8,8 0 0,1 786,658 H1023.3 v25 H844.5 l-6,4 -3,0 -6,-4 h-7 a8,8 0 0,0 -8,8 v99.5 a8,8 0 0,0 8,8 H1023.3 v11 H786 a8,8 0 0,1 -8,-8 z" fill="#6e4302" transform="translate(1,1)"/><path d="M778,666 A8,8 0 0,1 786,658 H1023.3 v25 H844.5 l-6,4 -3,0 -6,-4 h-7 a8,8 0 0,0 -8,8 v99.5 a8,8 0 0,0 8,8 H1023.3 v11 H786 a8,8 0 0,1 -8,-8 z" fill="#b87004"/><path d="M778,666 A8,8 0 0,1 786,658 H1023.3 M778,801.5 V666 M816.84,792.5 a8,8 0 0,0 5.66,5.66 a8,8 0 0,0 2.34,.34 H1023.3" fill="none" stroke="#f0a840" stroke-width="1" transform="translate(.5,.5)"/>
<text x="788.03" y="675.50" font-size="14.67" fill="#f3efe8" letter-spacing="0.067" >when</text>
<rect x="832" y="663.3" width="80.9" height="15.6" rx="4" fill="#fff" fill-opacity="0.5"/><text x="837.50" y="675.60" font-size="14.67" fill="#f3efe8" letter-spacing="-0.122" >Screen3</text><path d="M899.4,669.3 h5.8 l-2.9,3.8z" fill="#ffa51e"/>
<text x="918.70" y="675.50" font-size="14.67" fill="#f3efe8" letter-spacing="-0.063" >.Back Pressed</text>
<text x="788.00" y="700.90" font-size="14.67" fill="#f3efe8" letter-spacing="-0.010" >do</text>
<path d="M815.5,692 A8,8 0 0,1 823.5,684 H830.5 l6,4 3,0 6,-4 H894.5 v5 c0,10 -8,-8 -8,7.5 s8,-2.5 8,7.5 v16 H894.5 l-6,4 -3,0 -6,-4 h-7 a8,8 0 0,0 -8,8 v14 a8,8 0 0,0 8,8 H894.5 v10 H894.5 l-6,4 -3,0 -6,-4 h-7 a8,8 0 0,0 -8,8 v11 a8,8 0 0,0 8,8 H894.5 v10 H845.5 l-6,4 -3,0 -6,-4 H823.5 a8,8 0 0,1 -8,-8 z" fill="#7d5302" transform="translate(1,1)"/><path d="M815.5,692 A8,8 0 0,1 823.5,684 H830.5 l6,4 3,0 6,-4 H894.5 v5 c0,10 -8,-8 -8,7.5 s8,-2.5 8,7.5 v16 H894.5 l-6,4 -3,0 -6,-4 h-7 a8,8 0 0,0 -8,8 v14 a8,8 0 0,0 8,8 H894.5 v10 H894.5 l-6,4 -3,0 -6,-4 h-7 a8,8 0 0,0 -8,8 v11 a8,8 0 0,0 8,8 H894.5 v10 H845.5 l-6,4 -3,0 -6,-4 H823.5 a8,8 0 0,1 -8,-8 z" fill="#d08b04"/><path d="M815.5,692 A8,8 0 0,1 823.5,684 H830.5 l6,4 3,0 6,-4 H894.5 M815.5,789 V692 M866.84,744 a8,8 0 0,0 5.66,5.66 a8,8 0 0,0 2.34,.34 H894.5 M866.84,781 a8,8 0 0,0 5.66,5.66 a8,8 0 0,0 2.34,.34 H894.5" fill="none" stroke="#f7bc4c" stroke-width="1" transform="translate(.5,.5)"/>
<rect x="825.4" y="688.9" width="16" height="16" rx="4" fill="#6c82af" stroke="#e3c88c" stroke-opacity=".75" stroke-width="1"/>
<path d="M838.29,697.22 L838.04,698.47 L836.63,698.50 L836.11,699.27 L836.63,700.59 L835.57,701.29 L834.55,700.31 L833.64,700.49 L833.08,701.79 L831.83,701.54 L831.80,700.13 L831.03,699.61 L829.71,700.13 L829.01,699.07 L829.99,698.05 L829.81,697.14 L828.51,696.58 L828.76,695.33 L830.17,695.30 L830.69,694.53 L830.17,693.21 L831.23,692.51 L832.25,693.49 L833.16,693.31 L833.72,692.01 L834.97,692.26 L835.00,693.67 L835.77,694.19 L837.09,693.67 L837.79,694.73 L836.81,695.75 L836.99,696.66z M833.40,695.00 a1.900,1.900 0 1,0 .01,0z" fill="#f2d08c" fill-rule="evenodd"/>
<text x="853.00" y="701.70" font-size="14.67" fill="#f3efe8" letter-spacing="-0.163" >if</text>
<text x="825.30" y="737.50" font-size="14.67" fill="#f3efe8" letter-spacing="-0.014" >then</text>
<text x="825.30" y="777.60" font-size="14.67" fill="#f3efe8" letter-spacing="-0.066" >else</text>
<path d="M895.5,684 H1313.2 v36 H895.5 V704 c0,-10 -8,8 -8,-7.5 s8,2.5 8,-7.5 z" fill="#1d2656" transform="translate(1,1)"/><path d="M895.5,684 H1313.2 v36 H895.5 V704 c0,-10 -8,8 -8,-7.5 s8,2.5 8,-7.5 z" fill="#303f8f"/><path d="M895.5,684 H1313.2 M895.5,684 V692 M895.5,702.5 V720 M888.14,702 q-1.52,-5.5 0,-11 M893.5,692.4 l-3.6,-2.1" fill="none" stroke="#6a94d8" stroke-width="1" transform="translate(.5,.5)"/>
<path d="M911.8,690 H1223.2 v25 H911.8 V710 c0,-10 -8,8 -8,-7.5 s8,2.5 8,-7.5 z" fill="#495d1f" transform="translate(1,1)"/><path d="M911.8,690 H1223.2 v25 H911.8 V710 c0,-10 -8,8 -8,-7.5 s8,2.5 8,-7.5 z" fill="#7a9b34"/><path d="M911.8,690 H1223.2 M911.8,690 V698 M911.8,708.5 V715 M904.44,708 q-1.52,-5.5 0,-11 M909.8,698.4 l-3.6,-2.1" fill="none" stroke="#a9d264" stroke-width="1" transform="translate(.5,.5)"/>
<rect x="916.6" y="695.3" width="170.8" height="15.6" rx="4" fill="#fff" fill-opacity="0.5"/><text x="922.00" y="707.60" font-size="14.67" fill="#f3efe8" letter-spacing="-0.033" >VerticalScrollHandler1</text><path d="M1073.7,701.3 h5.8 l-2.9,3.8z" fill="#8ccc3c"/>
<text x="1093.40" y="707.60" font-size="14.67" fill="#f3efe8" >.</text>
<rect x="1101.4" y="695.3" width="115.4" height="15.6" rx="4" fill="#fff" fill-opacity="0.5"/><text x="1106.60" y="707.60" font-size="14.67" fill="#f3efe8" letter-spacing="-0.043" >ScrollPosition</text><path d="M1202.6,701.3 h5.8 l-2.9,3.8z" fill="#8ccc3c"/>
<path d="M1223.7,690.5 V716.5 H911.8" fill="none" stroke="#6a94d8" stroke-width="1"/>
<rect x="1227.8" y="694.1" width="34.1" height="15.6" rx="4" fill="#fff" fill-opacity="0.5"/><text x="1232.80" y="706.40" font-size="14.67" fill="#f3efe8" >≠</text><path d="M1248.2,700.1 h5.8 l-2.9,3.8z" fill="#5a96e1"/>
<path d="M1274,690 H1302.5 v25 H1274 V710 c0,-10 -8,8 -8,-7.5 s8,2.5 8,-7.5 z" fill="#1d2656" transform="translate(1,1)"/><path d="M1274,690 H1302.5 v25 H1274 V710 c0,-10 -8,8 -8,-7.5 s8,2.5 8,-7.5 z" fill="#303f8f"/><path d="M1274,690 H1302.5 M1274,690 V698 M1274,708.5 V715 M1266.64,708 q-1.52,-5.5 0,-11 M1272,698.4 l-3.6,-2.1" fill="none" stroke="#6a94d8" stroke-width="1" transform="translate(.5,.5)"/>
<path d="M1303.8,690.5 V715.5 H1274" fill="none" stroke="#6a94d8" stroke-width="1"/>
<rect x="1279.1" y="695" width="17.8" height="15.9" rx="4" fill="#fff" fill-opacity="0.5"/>
<text x="1284.1" y="708" font-size="16" fill="#f3efe8" stroke="#f3efe8" stroke-width=".4" style="font-family:'Liberation Serif',serif">0</text>
<path d="M865.5,729 A8,8 0 0,1 873.5,721 H880.5 l6,4 3,0 6,-4 H1156.8 v25 H895.5 l-6,4 -3,0 -6,-4 H873.5 a8,8 0 0,1 -8,-8 z" fill="#2d1a57" transform="translate(1,1)"/><path d="M865.5,729 A8,8 0 0,1 873.5,721 H880.5 l6,4 3,0 6,-4 H1156.8 v25 H895.5 l-6,4 -3,0 -6,-4 H873.5 a8,8 0 0,1 -8,-8 z" fill="#4b2b91"/><path d="M865.5,729 A8,8 0 0,1 873.5,721 H880.5 l6,4 3,0 6,-4 H1156.8 M865.5,738 V729" fill="none" stroke="#7e5cc4" stroke-width="1" transform="translate(.5,.5)"/>
<text x="875.30" y="738.70" font-size="14.67" fill="#f3efe8" letter-spacing="-0.105" >call</text>
<rect x="906.1" y="726.3" width="170.6" height="15.6" rx="4" fill="#fff" fill-opacity="0.5"/><text x="911.30" y="738.60" font-size="14.67" fill="#f3efe8" letter-spacing="-0.028" >VerticalScrollHandler1</text><path d="M1063.1,732.3 h5.8 l-2.9,3.8z" fill="#7a52e0"/>
<text x="1082.90" y="738.70" font-size="14.67" fill="#f3efe8" letter-spacing="-0.067" >.ScrollTop</text>
<path d="M865.5,769 A8,8 0 0,1 873.5,761 H880.5 l6,4 3,0 6,-4 H994.1 v25 H873.5 a8,8 0 0,1 -8,-8 z" fill="#7d5302" transform="translate(1,1)"/><path d="M865.5,769 A8,8 0 0,1 873.5,761 H880.5 l6,4 3,0 6,-4 H994.1 v25 H873.5 a8,8 0 0,1 -8,-8 z" fill="#d08b04"/><path d="M865.5,769 A8,8 0 0,1 873.5,761 H880.5 l6,4 3,0 6,-4 H994.1 M865.5,778 V769" fill="none" stroke="#f7bc4c" stroke-width="1" transform="translate(.5,.5)"/>
<text x="874.70" y="778.70" font-size="14.67" fill="#f3efe8" letter-spacing="-0.009" >close application</text>
</g>
<g id="backpack">
<path d="M1885.5 224c4 1 8 6 8.6 14l.6 24c0 4-2 6-6 6.5z" fill="#06281f"/>
<path d="M1851.5 215.5c.5-6 12-6 12.500 0" fill="none" stroke="#0a2622" stroke-width="2.6"/>
<path d="M1866 214.500c11 .5 19 9 20 24l1.600 30c.2 4-2 6-5.500 6.200l-6 .3z" fill="#3fa39b" stroke="#0b2a27" stroke-width="1.300"/>
<path d="M1831.300 246c0-18 10-31 25-31s23.500 12 24 29l.8 24.500c.1 4-2.400 6.700-6.500 6.800l-36 .7c-4.500 .1-7.300-2.500-7.300-7z" fill="#48b2aa" stroke="#0b2a27" stroke-width="1.300"/>
<rect x="1840.600" y="251.600" width="32" height="17.600" rx="4.500" fill="none" stroke="#0b2a27" stroke-width="1.500"/>
<path d="M1841 258.200c10-1.200 21-1.200 31.200 0" fill="none" stroke="#0b2a27" stroke-width="1.400"/>
</g>
<g id="zoomctl" fill="none" stroke="#050606">
<circle cx="1868.800" cy="786.700" r="11.400" stroke-width="2.400"/><circle cx="1868.800" cy="786.700" r="4.400" fill="#050606" stroke="none"/>
<path d="M1868.800 771v4.500M1868.800 798v4.500M1853 786.700h4.500M1880 786.700h4.500" stroke-width="2.400"/>
<circle cx="1867.900" cy="830.400" r="14.800" stroke-width="2"/><path d="M1860.800 830.400h14.200M1867.900 823.300v14.200" stroke-width="2.200"/>
<circle cx="1867.900" cy="864.800" r="14.800" stroke-width="2"/><path d="M1860.800 864.800h14.200" stroke-width="2.200"/>
</g>
<g id="trash" fill="#050606"><path d="M1839.100 911h11.500l2.500-3.300h13.500l2.500 3.300h11.900v6.100h-41.900z"/><path d="M1841.900 919.100h35.900v39.500a3 3 0 0 1-3 3h-29.900a3 3 0 0 1-3-3z"/></g>
<rect x="1906" y="355" width="12" height="494" rx="5" fill="#c9c5bf"/>
<rect x="612" y="984" width="999.500" height="12" rx="5" fill="#c9c5bf"/>
<g id="warn">
<path d="M333.6 901.400l10.400-10.900l10.400 10.900z" fill="#e1ded8"/>
<path d="M333.6 928.700l10.400 10.700l10.400-10.700z" fill="#e1ded8"/>
<path d="M400.5 901.400l10.400-10.900l10.400 10.900z" fill="#e1ded8"/>
<path d="M400.5 928.700l10.400 10.700l10.400-10.700z" fill="#e1ded8"/>
<path d="M342.050 907.400l8.500 15.200h-17z" fill="#a9a43c" stroke="#8d8a3a" stroke-width=".8" stroke-linejoin="round"/><path d="M342.050 912.300v5.600M342.050 919.300v1.600" stroke="#ddd9a8" stroke-width="1.700"/>
<circle cx="407.600" cy="915.100" r="8" fill="#bd1e24" stroke="#8d8f93" stroke-width="1.200"/><path d="M403.700 911.200l7.800 7.800M411.500 911.200l-7.800 7.800" stroke="#e9e4e0" stroke-width="1.900"/>
<text x="353.90" y="921.80" font-size="13.40" fill="#e1ded8" stroke="#e1ded8" stroke-width=".35">0</text>
<text x="418.90" y="921.80" font-size="13.40" fill="#e1ded8" stroke="#e1ded8" stroke-width=".35">0</text>
<rect x="319.100" y="942.500" width="119.700" height="18.800" fill="#24262a" stroke="#969691" stroke-width="2"/>
<text x="332.90" y="956.50" font-size="13.30" fill="#e1ded8" letter-spacing="-0.087" stroke="#e1ded8" stroke-width=".35">Show Warnings</text>
</g>
</svg>
</body></html>
